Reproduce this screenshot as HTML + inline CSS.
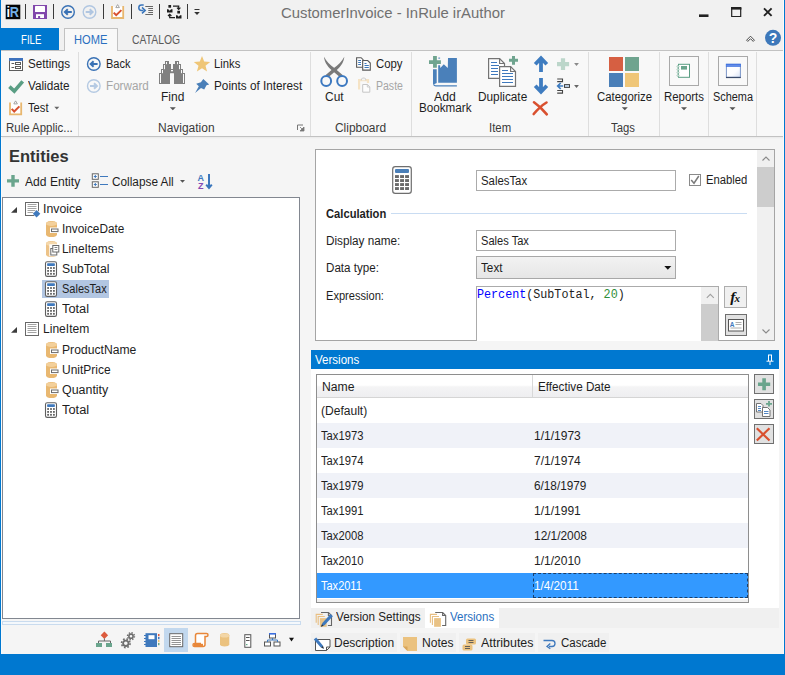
<!DOCTYPE html>
<html>
<head>
<meta charset="utf-8">
<title>CustomerInvoice - InRule irAuthor</title>
<style>
*{box-sizing:border-box;margin:0;padding:0}
html,body{width:785px;height:675px;overflow:hidden}
body{font-family:"Liberation Sans",sans-serif;font-size:12px;color:#1e1e1e;background:#f1f1f1;position:relative}
.abs{position:absolute}
.t{position:absolute;white-space:nowrap;line-height:14px;transform-origin:0 50%}
#win{position:absolute;left:0;top:0;width:785px;height:675px;border-left:1px solid #0078d0;border-right:1px solid #0078d0;background:#f1f1f1}
#status{position:absolute;left:0;top:654px;width:785px;height:21px;background:#0078d0}
#filetab{position:absolute;left:0;top:28px;width:59px;height:23px;background:#0078d0}
#hometab{position:absolute;left:64px;top:28px;width:54px;height:23px;background:#f8f8f8;border:1px solid #c2c2c2;border-bottom:none}
#ribbon{position:absolute;left:1px;top:50px;width:783px;height:87px;background:#f8f8f8;border-top:1px solid #c2c2c2;border-bottom:1px solid #c2c2c2}
#work{position:absolute;left:1px;top:137px;width:783px;height:517px;background:linear-gradient(#e9e9e9,#f5f5f5 2px,#f5f5f5)}
.sep{position:absolute;width:1px;background:#dedede;top:52px;height:84px}
#tree{position:absolute;left:2px;top:197px;width:298px;height:422px;background:#fff;border:1px solid #828790}
#sel{position:absolute;left:42px;top:280px;width:67px;height:18px;background:#b2c6e2}
#split{position:absolute;left:2px;top:621px;width:299px;height:4px;border:1px solid #c9dbee;background:#f4f8fc}
#tbsel{position:absolute;left:164px;top:628px;width:24px;height:24px;background:#c2d8ee}
#prop{position:absolute;left:315px;top:149px;width:460px;height:192px;background:#fff;border:1px solid #a5a5a5}
#psb{position:absolute;left:757px;top:150px;width:17px;height:190px;background:#f0f0f0}
#psbt{position:absolute;left:757px;top:167px;width:17px;height:40px;background:#cdcdcd}
.inp{position:absolute;background:#fff;border:1px solid #ababab}
#vhead{position:absolute;left:311px;top:350px;width:468px;height:19px;background:#0078d0}
#vbody{position:absolute;left:311px;top:369px;width:468px;height:239px;background:#fff}
#tbl{position:absolute;left:316px;top:374px;width:433px;height:229px;background:#fff;border:1px solid #8e8e8e}
#thead{position:absolute;left:317px;top:375px;width:431px;height:23px;background:linear-gradient(#ffffff,#ffffff 46%,#f4f4f5 54%,#eeeef0);border-bottom:1px solid #d5d5d5}
.alt{position:absolute;left:317px;width:431px;height:25px;background:#f0f2f8}
.btn{position:absolute;left:754px;width:20px;height:20px;background:#e1e1e1;border:1px solid #707070}
.tab2{position:absolute;top:633px;height:19px;background:#f0f0f0}
</style>
</head>
<body>
<div id="win"></div>
<div id="filetab"></div>
<div id="ribbon"></div>
<div id="work"></div>
<div id="hometab"></div>
<div class="sep" style="left:78px"></div>
<div class="sep" style="left:310px"></div>
<div class="sep" style="left:411px"></div>
<div class="sep" style="left:588px"></div>
<div class="sep" style="left:659px"></div>
<div class="sep" style="left:708px"></div>
<div class="sep" style="left:756px"></div>

<div class="abs" style="left:1px;top:137px;width:1px;height:517px;background:#fafafa"></div>
<div id="tree"></div>
<div id="sel"></div>
<div id="split"></div>
<div id="tbsel"></div>

<div id="prop"></div>
<div id="psb"></div><div id="psbt"></div>
<div class="inp" style="left:476px;top:170px;width:200px;height:21px"></div>
<div class="abs" style="left:689px;top:174px;width:12px;height:12px;border:1px solid #8a8a8a;background:#fff"></div>
<div class="abs" style="left:391px;top:213px;width:356px;height:1px;background:#c9dcf2"></div>
<div class="inp" style="left:476px;top:230px;width:200px;height:21px"></div>
<div class="inp" style="left:476px;top:256px;width:200px;height:23px;background:linear-gradient(#f2f2f2,#e6e6e6);border-color:#a8a8a8"></div>
<div class="inp" style="left:476px;top:286px;width:243px;height:55px;border-bottom:none"></div>
<div class="abs" style="left:701px;top:287px;width:17px;height:54px;background:#f0f0f0"></div>
<div class="abs" style="left:701px;top:304px;width:17px;height:37px;background:#cdcdcd"></div>
<div class="abs" style="left:724px;top:286px;width:23px;height:22px;background:#f0f0f0;border:1px solid #adadad"></div>
<div class="abs" style="left:725px;top:314px;width:22px;height:22px;background:#e1e1e1;border:1px solid #6e6e6e"></div>

<div id="vhead"></div>
<div id="vbody"></div>
<div class="abs" style="left:311px;top:608px;width:468px;height:20px;background:#f0f0f0"></div>
<div id="tbl"></div>
<div class="abs" style="left:317px;top:599px;width:431px;height:3px;background:#f0f0f0"></div>
<div id="thead"></div>
<div class="abs" style="left:532px;top:375px;width:1px;height:22px;background:#d8d8d8"></div>
<div class="alt" style="top:423px"></div>
<div class="alt" style="top:473px"></div>
<div class="alt" style="top:523px"></div>
<div class="alt" style="top:573px;background:#3399ff"></div>
<div class="abs" style="left:533px;top:573px;width:215px;height:25px;border:1px dashed #1a3f6b"></div>
<div class="btn" style="top:374px"></div>
<div class="btn" style="top:399px"></div>
<div class="btn" style="top:424px"></div>
<div class="abs" style="left:425px;top:608px;width:74px;height:20px;background:#fff"></div>
<div class="tab2" style="left:311px;width:86px"></div>
<div class="tab2" style="left:400px;width:56px"></div>
<div class="tab2" style="left:459px;width:76px"></div>
<div class="tab2" style="left:538px;width:71px"></div>
<div class="abs" style="left:783px;top:0;width:1px;height:654px;background:#fbfbfb"></div>
<div class="t" style="left:280.7px;top:4.1px;transform:scaleX(0.9590);font-size:15.5px;color:#707070;line-height:18px">CustomerInvoice - InRule irAuthor</div>
<div class="t" style="left:20.5px;top:32.7px;transform:scaleX(0.8049);color:#fff">FILE</div>
<div class="t" style="left:74.2px;top:32.7px;transform:scaleX(0.9278);color:#2a6fc0">HOME</div>
<div class="t" style="left:132.1px;top:32.7px;transform:scaleX(0.8654);color:#5a5a5a">CATALOG</div>
<div class="t" style="left:28.1px;top:56.9px;transform:scaleX(0.9686);">Settings</div>
<div class="t" style="left:28.3px;top:78.7px;transform:scaleX(0.9792);">Validate</div>
<div class="t" style="left:27.6px;top:100.7px;transform:scaleX(0.9357);">Test</div>
<div class="t" style="left:5.9px;top:120.7px;transform:scaleX(0.9536);color:#3a3a3a">Rule Applic...</div>
<div class="t" style="left:106.1px;top:56.9px;transform:scaleX(0.9180);">Back</div>
<div class="t" style="left:106.1px;top:78.7px;transform:scaleX(0.9724);color:#a6a6a6">Forward</div>
<div class="t" style="left:160.9px;top:89.7px;transform:scaleX(0.9981);">Find</div>
<div class="t" style="left:214.1px;top:56.9px;transform:scaleX(0.9388);">Links</div>
<div class="t" style="left:214.1px;top:78.7px;transform:scaleX(0.9795);">Points of Interest</div>
<div class="t" style="left:157.9px;top:120.7px;transform:scaleX(0.9982);color:#3a3a3a">Navigation</div>
<div class="t" style="left:325.0px;top:89.7px;transform:scaleX(0.9953);">Cut</div>
<div class="t" style="left:376.1px;top:56.9px;transform:scaleX(0.9459);">Copy</div>
<div class="t" style="left:376.1px;top:78.7px;transform:scaleX(0.8766);color:#a6a6a6">Paste</div>
<div class="t" style="left:335.1px;top:120.7px;transform:scaleX(0.9946);color:#3a3a3a">Clipboard</div>
<div class="t" style="left:433.6px;top:89.7px;transform:scaleX(1.0206);">Add</div>
<div class="t" style="left:418.6px;top:100.7px;transform:scaleX(0.9717);">Bookmark</div>
<div class="t" style="left:478.1px;top:89.7px;transform:scaleX(0.9834);">Duplicate</div>
<div class="t" style="left:489.0px;top:120.7px;transform:scaleX(0.9467);color:#3a3a3a">Item</div>
<div class="t" style="left:597.3px;top:89.7px;transform:scaleX(0.9495);">Categorize</div>
<div class="t" style="left:611.4px;top:120.7px;transform:scaleX(0.9425);color:#3a3a3a">Tags</div>
<div class="t" style="left:664.1px;top:89.7px;transform:scaleX(0.9517);">Reports</div>
<div class="t" style="left:712.6px;top:89.7px;transform:scaleX(0.9084);">Schema</div>
<div class="t" style="left:9.3px;top:145.7px;transform:scaleX(0.9998);font-size:16.5px;font-weight:bold;line-height:20px;color:#333">Entities</div>
<div class="t" style="left:25.1px;top:175.1px;transform:scaleX(1.0091);">Add Entity</div>
<div class="t" style="left:112.4px;top:175.1px;transform:scaleX(0.9840);">Collapse All</div>
<div class="t" style="left:42.6px;top:201.7px;transform:scaleX(1.0255);">Invoice</div>
<div class="t" style="left:62.0px;top:221.7px;transform:scaleX(0.9830);">InvoiceDate</div>
<div class="t" style="left:62.0px;top:241.7px;transform:scaleX(0.9917);">LineItems</div>
<div class="t" style="left:62.0px;top:261.7px;transform:scaleX(1.0171);">SubTotal</div>
<div class="t" style="left:62.0px;top:281.7px;transform:scaleX(0.9178);">SalesTax</div>
<div class="t" style="left:62.0px;top:301.7px;transform:scaleX(1.0686);">Total</div>
<div class="t" style="left:43.2px;top:321.7px;transform:scaleX(1.0058);">LineItem</div>
<div class="t" style="left:62.3px;top:342.7px;transform:scaleX(1.0126);">ProductName</div>
<div class="t" style="left:62.3px;top:362.7px;transform:scaleX(0.9982);">UnitPrice</div>
<div class="t" style="left:62.3px;top:382.7px;transform:scaleX(1.0357);">Quantity</div>
<div class="t" style="left:62.3px;top:402.7px;transform:scaleX(1.0726);">Total</div>
<div class="t" style="left:480.9px;top:173.7px;transform:scaleX(0.9466);">SalesTax</div>
<div class="t" style="left:705.6px;top:172.7px;transform:scaleX(0.9399);">Enabled</div>
<div class="t" style="left:325.8px;top:206.7px;transform:scaleX(0.9322);font-weight:bold">Calculation</div>
<div class="t" style="left:325.7px;top:234.1px;transform:scaleX(0.9772);">Display name:</div>
<div class="t" style="left:480.7px;top:234.1px;transform:scaleX(0.9245);">Sales Tax</div>
<div class="t" style="left:325.7px;top:260.7px;transform:scaleX(0.9670);">Data type:</div>
<div class="t" style="left:480.7px;top:260.7px;transform:scaleX(0.9766);">Text</div>
<div class="t" style="left:325.7px;top:288.5px;transform:scaleX(0.9234);">Expression:</div>
<div class="t" style="left:477.2px;top:287.7px;transform:scaleX(0.9765);font-family:'Liberation Mono',monospace;font-size:12px;color:#222"><span style="color:#0000ff">Percent</span>(SubTotal, <span style="color:#2f8f3a">20</span>)</div>
<div class="t" style="left:315.3px;top:353.3px;transform:scaleX(0.9624);color:#fff">Versions</div>
<div class="t" style="left:322.0px;top:379.7px;transform:scaleX(1.0151);">Name</div>
<div class="t" style="left:538.2px;top:379.7px;transform:scaleX(0.9747);">Effective Date</div>
<div class="t" style="left:320.8px;top:403.7px;transform:scaleX(1.0040);">(Default)</div>
<div class="t" style="left:320.8px;top:428.7px;transform:scaleX(0.9344);">Tax1973</div>
<div class="t" style="left:533.9px;top:428.7px;transform:scaleX(1.0017);">1/1/1973</div>
<div class="t" style="left:320.8px;top:453.7px;transform:scaleX(0.9344);">Tax1974</div>
<div class="t" style="left:533.9px;top:453.7px;transform:scaleX(1.0017);">7/1/1974</div>
<div class="t" style="left:320.8px;top:478.7px;transform:scaleX(0.9344);">Tax1979</div>
<div class="t" style="left:533.9px;top:478.7px;transform:scaleX(0.9814);">6/18/1979</div>
<div class="t" style="left:320.8px;top:503.7px;transform:scaleX(0.9344);">Tax1991</div>
<div class="t" style="left:533.9px;top:503.7px;transform:scaleX(1.0017);">1/1/1991</div>
<div class="t" style="left:320.8px;top:528.7px;transform:scaleX(0.9344);">Tax2008</div>
<div class="t" style="left:533.9px;top:528.7px;transform:scaleX(0.9927);">12/1/2008</div>
<div class="t" style="left:320.8px;top:553.7px;transform:scaleX(0.9344);">Tax2010</div>
<div class="t" style="left:533.9px;top:553.7px;transform:scaleX(1.0017);">1/1/2010</div>
<div class="t" style="left:320.8px;top:578.7px;transform:scaleX(0.9172);color:#fff">Tax2011</div>
<div class="t" style="left:533.9px;top:578.7px;transform:scaleX(0.9754);color:#fff">1/4/2011</div>
<div class="t" style="left:336.0px;top:610.2px;transform:scaleX(0.9756);">Version Settings</div>
<div class="t" style="left:450.1px;top:610.2px;transform:scaleX(0.9602);color:#2a6fc0">Versions</div>
<div class="t" style="left:334.0px;top:636.2px;transform:scaleX(1.0011);">Description</div>
<div class="t" style="left:421.6px;top:636.2px;transform:scaleX(1.0077);">Notes</div>
<div class="t" style="left:480.6px;top:636.2px;transform:scaleX(1.0354);">Attributes</div>
<div class="t" style="left:560.6px;top:636.2px;transform:scaleX(0.9583);">Cascade</div>
<svg id="ico" class="abs" style="left:0;top:0;pointer-events:none" width="785" height="675" viewBox="0 0 785 675">
<!-- title bar -->
<rect x="5.700" y="4.700" width="14.600" height="14.500" fill="#050505"/>
<text transform="translate(6.400,16.700) scale(0.88,1)" font-family="Liberation Sans, sans-serif" font-weight="bold" font-size="14.500" fill="#fff">i<tspan fill="#74b0e6" dx="-0.300">R</tspan></text>
<g stroke="#3a3a3a" stroke-width="1"><path d="M25.5 4v15M53.5 4v15M103.5 4v15M131.5 4v15M159.5 4v15M187.5 4v15"/></g>
<!-- save -->
<path d="M33 5h14v14h-14z" fill="#8147ab"/><rect x="35" y="6" width="10" height="6" rx="0.6" fill="#fff"/><rect x="36" y="14.2" width="8" height="3.8" fill="#fff"/><rect x="38.1" y="16" width="2" height="2.2" fill="#8147ab"/>
<!-- back / forward -->
<g fill="none" stroke="#3a72b5" stroke-width="1.4"><circle cx="68" cy="12" r="6.3"/><path d="M71.800 12h-6M67.800 9.200l-2.900 2.800 2.900 2.800" stroke-width="2"/></g>
<g fill="none" stroke="#b0c6e1" stroke-width="1.4"><circle cx="89.500" cy="12" r="6.300"/><path d="M85.700 12h6M89.700 9.200l2.900 2.800-2.900 2.800" stroke-width="2"/></g>
<!-- clipboard check -->
<g id="clipc"><rect x="112" y="6.500" width="11.200" height="11.500" fill="#fff"/><path d="M112 6.100v11.900h11.200v-11.900" fill="none" stroke="#e8b76f" stroke-width="1.800"/><path d="M115.800 7.600l1.800-3 1.800 3z" fill="#fff" stroke="#9a9a9a" stroke-width=".9"/><path d="M113.700 12.600l2.500 2.600 5.200-5.100" fill="none" stroke="#d8502f" stroke-width="2"/></g>
<!-- step into -->
<path d="M143.700 5h-2.200a2.700 2.700 0 0 0 0 5.400h2" fill="none" stroke="#3a76bc" stroke-width="1.500"/><path d="M142 7.400l3.200 3-3.200 3" fill="none" stroke="#3a76bc" stroke-width="1.500"/>
<g stroke="#666" stroke-width="1"><path d="M145.300 6.500h7.700M148.300 8.500h4.700M148.300 10.500h4.700M148.300 12.500h4.700M145.300 14.500h7.700"/></g>
<!-- squares arrows -->
<g fill="#1e1e1e"><rect x="168.400" y="5" width="2.700" height="2.700"/><path d="M167 12.600v-3.300h1.300l1.400 1.500 1.400-1.500h1.400v3.300z"/><rect x="177.300" y="10.800" width="2.700" height="2.700"/><path d="M176 18.600v-3.300h1.300l1.400 1.500 1.400-1.500h1.400v3.300z"/></g>
<g fill="none" stroke="#1e1e1e" stroke-width="1.200"><path d="M173 6.200h5.700v2.800"/><path d="M177 7.600l1.700 1.700 1.700-1.700"/><path d="M175 17.600h-5.300v-2.800"/><path d="M168 16l1.700-1.700 1.700 1.700"/></g>
<!-- qat dropdown -->
<path d="M194.5 9.5h5" stroke="#333" stroke-width="1"/><path d="M194.2 12h5.6l-2.8 3z" fill="#333"/>
<!-- window controls -->
<rect x="699" y="14.4" width="9.5" height="2.6" fill="#222"/>
<path d="M731.7 8.5h9v8h-9z" fill="none" stroke="#222" stroke-width="1.2"/><rect x="731" y="7" width="10.4" height="2.6" fill="#222"/>
<path d="M764 8.3l7.6 7.6M771.6 8.3l-7.6 7.6" stroke="#222" stroke-width="1.9"/>
<path d="M746.6 40.2l3.9-4 3.9 4-1.2 1.2-2.7-2.7-2.7 2.7z" fill="#fff" stroke="#333" stroke-width=".9"/>
<circle cx="773" cy="37.8" r="8" fill="#3d78ba"/>
<text x="773" y="43" text-anchor="middle" font-family="Liberation Sans, sans-serif" font-weight="bold" font-size="14" fill="#fff">?</text>

<!-- ribbon: settings -->
<rect x="9.500" y="58.500" width="13" height="12" fill="#fff" stroke="#5c5c5c" stroke-width="1"/><rect x="9" y="58" width="14" height="2.900" fill="#3d72bd"/>
<g stroke="#5c5c5c" stroke-width="1" fill="#fff"><path d="M11.500 63.500h2.700M11.500 67.500h2.700"/><rect x="15.500" y="62.500" width="5" height="2"/><rect x="15.500" y="66.500" width="5" height="2"/></g>
<!-- validate -->
<path d="M9.400 86.600l4.900 4.500 8.400-9.800" fill="none" stroke="#5a9e84" stroke-width="3.600"/>
<!-- test -->
<g transform="translate(-102,96.300)"><rect x="112" y="6.500" width="11.200" height="11.500" fill="#fff"/><path d="M112 6.100v11.900h11.200v-11.900" fill="none" stroke="#e8b76f" stroke-width="1.800"/><path d="M115.800 7.600l1.800-3 1.800 3z" fill="#fff" stroke="#9a9a9a" stroke-width=".9"/><path d="M113.700 12.600l2.500 2.600 5.200-5.100" fill="none" stroke="#d8502f" stroke-width="2"/></g>
<path d="M54.300 106.800h5l-2.500 2.800z" fill="#666"/>
<!-- back/forward ribbon -->
<g fill="none" stroke="#3a72b5" stroke-width="1.400"><circle cx="93.800" cy="64" r="6.300"/><path d="M97.600 64h-6M93.600 61.200l-2.900 2.800 2.900 2.800" stroke-width="2"/></g>
<g fill="none" stroke="#b5cae3" stroke-width="1.400"><circle cx="93.800" cy="86" r="6.300"/><path d="M90 86h6M94 83.200l2.900 2.800-2.900 2.800" stroke-width="2"/></g>
<!-- binoculars -->
<g fill="#808080"><rect x="165" y="61" width="4" height="3.200"/><rect x="163" y="64" width="8" height="5.200"/><rect x="161" y="69" width="10" height="4.200"/><rect x="159" y="73" width="11" height="11"/>
<rect x="175" y="61" width="4" height="3.200"/><rect x="173" y="64" width="8" height="5.200"/><rect x="173" y="69" width="10" height="4.200"/><rect x="174" y="73" width="11" height="11"/><rect x="170.500" y="69" width="3" height="4.200"/></g>
<g fill="#fafafa"><rect x="160" y="74" width="1" height="9"/><rect x="162" y="70" width="1" height="3.200"/><rect x="164" y="65" width="1" height="4.200"/><rect x="166" y="62" width="1" height="2.200"/><rect x="183" y="74" width="1" height="9"/><rect x="181" y="70" width="1" height="3.200"/><rect x="179" y="65" width="1" height="4.200"/><rect x="177" y="62" width="1" height="2.200"/><rect x="171" y="70" width="2" height="1.300"/></g>
<path d="M169.800 107.300h6l-3 2.900z" fill="#555"/>
<!-- star -->
<path d="M202.0 56.0L204.2 61.6L210.2 61.9L205.5 65.7L207.1 71.6L202.0 68.3L196.9 71.6L198.5 65.7L193.8 61.9L199.8 61.6z" fill="#efc677"/>
<!-- pin -->
<path d="M203.300 79.100l5.900 5.500-2.700.7-2.300 4.100-3.200-1.300-5.900 5 3.700-6.900-2.600-2.400 4.700-1.600z" fill="#4a7fb8"/>
<!-- dialog launcher -->
<path d="M297.500 130v-5h5.500" fill="none" stroke="#777" stroke-width="1"/><path d="M304 127v4h-4zM300 127l3.300 3.300" fill="#777" stroke="#777" stroke-width=".8"/>
<!-- scissors -->
<path d="M324 56.800c.3 4.500 3 9.500 7.500 13.200l8.500 7.200 2.600-2.200-7.600-6.400c-5.200-3.600-8.600-7.300-11-11.800z" fill="#7a7a7a"/>
<path d="M344.300 56.800c-.3 4.500-3 9.500-7.500 13.200l-8.500 7.200-2.600-2.200 7.600-6.400c5.200-3.600 8.600-7.300 11-11.800z" fill="#7a7a7a"/>
<circle cx="326.200" cy="81" r="4.900" fill="none" stroke="#3b78c0" stroke-width="2"/><circle cx="342.100" cy="81" r="4.900" fill="none" stroke="#3b78c0" stroke-width="2"/>
<!-- copy -->
<g fill="#fff" stroke="#5a5a5a" stroke-width="1.100"><path d="M356.600 57.700h4.500l2 2v7.500h-6.500z"/><path d="M362.700 60.500h5l2.600 2.600v7h-7.600z"/></g>
<g stroke="#3d78ba" stroke-width="1"><path d="M358.200 60.500h2.800M358.200 62.500h2.800M358.200 64.500h2.800M364.500 63.500h2M364.500 65.500h4.300M364.500 67.500h4.300"/></g>
<!-- paste (disabled) -->
<path d="M359.100 89.500v-9.400h8.900v3" fill="none" stroke="#f5e3c5" stroke-width="2.200"/><path d="M361.500 80.300v-1.300l1-1h2.200l1 1v1.300" fill="#f4f4f4" stroke="#c9c9c9" stroke-width=".9"/><path d="M362.700 84.500h4.700l2.400 2.400v5.300h-7.100z" fill="#fdfdfd" stroke="#c6c6c6" stroke-width="1"/><path d="M367.300 84.600v2.400h2.400" fill="none" stroke="#c6c6c6" stroke-width=".9"/>
<!-- add bookmark -->
<path d="M438.200 82.800v-17.500h1.900l.2 2.700 3.500-3.700 4 3.700.2-10.100h8.900v24.900z" fill="#4a80ba"/>
<path d="M433 69.200h3.700v13.800l-3.700 1.800z" fill="#4a80ba"/>
<path d="M433.600 84.500c.5 1 1.200 1.300 2.200 1.300h21.100" fill="none" stroke="#4a80ba" stroke-width="1.300"/>
<rect x="438.300" y="57.600" width="1.800" height="1" fill="#4a80ba"/>
<path d="M429 62.050h11.900M434.950 56v11.700" stroke="#6fa48f" stroke-width="3.800"/>
<!-- duplicate -->
<g fill="#fff" stroke="#747474" stroke-width="1.200" stroke-linejoin="miter"><path d="M488.600 58.600h11l4.900 4.900v14.900h-15.900z"/><path d="M499.600 58.600v4.900h4.900" fill="none"/><path d="M499.600 66.600h11l4.900 4.900v14.900h-15.900z"/><path d="M510.600 66.600v4.900h4.900" fill="none"/></g>
<g stroke="#3f79bd" stroke-width="1.100"><path d="M491 62.500h6M491 65.500h8M491 68.500h7M491 71.500h7M491 74.500h7M502 70.500h6M502 73.500h11M502 76.500h11M502 79.500h11M502 82.500h11"/></g>
<path d="M509 60.350h9M513.500 56v8.700" stroke="#6fa48f" stroke-width="3"/>
<!-- up / down arrows -->
<path d="M541 71.900v-13M535.200 64.200l5.800-6 5.800 6" fill="none" stroke="#3e7cc0" stroke-width="3.800" stroke-linejoin="miter"/>
<path d="M541 78v13M535.200 85.700l5.800 6 5.800-6" fill="none" stroke="#3e7cc0" stroke-width="3.800" stroke-linejoin="miter"/>
<path d="M534 102.300c5 3.500 9 7.500 12.800 12M546.500 102.500c-5 3-9 7-12.800 11.500" fill="none" stroke="#d9502f" stroke-width="2.600" stroke-linecap="round"/>
<!-- add small (disabled) -->
<path d="M557 64.050h12.100M563 58.200v11.700" stroke="#bcd6ca" stroke-width="4.200"/>
<path d="M574.100 63h4.800l-2.400 2.900z" fill="#8a8a8a"/>
<!-- indent -->
<g fill="none" stroke="#444" stroke-width="1.100"><path d="M557.200 79h5.300v2.600h-5.300M557.200 90.500h5.300v2.600h-5.300"/></g>
<path d="M563.200 86h-5M560.700 83l-3 3 3 3" fill="none" stroke="#3e7cc0" stroke-width="1.700"/><rect x="564.500" y="84.600" width="5" height="2.800" fill="#c5d9f0" stroke="#444" stroke-width="1"/>
<path d="M574.100 85h4.800l-2.400 2.900z" fill="#666"/>
<!-- categorize -->
<rect x="609" y="57" width="14" height="14" fill="#d65f42"/><rect x="625" y="57" width="14" height="14" fill="#6fa48f"/><rect x="609" y="73" width="14" height="14" fill="#4a7fb8"/><rect x="625" y="73" width="14" height="14" fill="#efc678"/>
<path d="M621.800 107.300h6l-3 2.900z" fill="#555"/>
<!-- reports -->
<rect x="669.500" y="56.500" width="29" height="29" fill="#f9f9f9" stroke="#a9a9a9"/>
<rect x="678.500" y="64.300" width="11" height="13" fill="#fff" stroke="#5a9e84" stroke-width="1"/><rect x="681" y="66" width="6" height="3.600" fill="#6aa58d"/><g fill="#f9f9f9" stroke="#7fb59f" stroke-width=".7"><circle cx="678" cy="66.500" r="1"/><circle cx="678" cy="69.500" r="1"/><circle cx="678" cy="72.500" r="1"/><circle cx="678" cy="75.500" r="1"/></g>
<path d="M681 107.300h6l-3 2.900z" fill="#555"/>
<!-- schema -->
<defs><linearGradient id="sg" x1="0" y1="0" x2="1" y2="1"><stop offset="0" stop-color="#fff"/><stop offset=".6" stop-color="#fdfdff"/><stop offset="1" stop-color="#d9e2f5"/></linearGradient></defs>
<rect x="718.500" y="56.500" width="29" height="29" fill="#f9f9f9" stroke="#a9a9a9"/>
<rect x="726.400" y="64.300" width="14" height="13" fill="url(#sg)" stroke="#7c96c8" stroke-width="1"/><path d="M726 77.500h14.800" stroke="#3b4b6b" stroke-width="1.200"/><rect x="725.900" y="63.800" width="15" height="3" fill="#3f72e0"/><path d="M726.400 65.300h14" stroke="#7fa2ee" stroke-width=".7"/>
<path d="M729.500 107.300h6l-3 2.900z" fill="#555"/>
<!-- left panel icons -->
<path d="M7 180.900h12M13 175v11.700" stroke="#6aa58d" stroke-width="3.400"/>
<g fill="#fff" stroke="#666" stroke-width="1"><rect x="92.300" y="173.800" width="6" height="5.500"/><rect x="92.300" y="181.800" width="6" height="5.500"/></g><path d="M93.800 176.500h3M95.300 175v3M93.800 184.500h3M95.300 183v3" stroke="#3f79bd" stroke-width="1"/><path d="M100 176.500h8M100 184.500h8" stroke="#3f79bd" stroke-width="1"/>
<path d="M180 180h5l-2.500 2.800z" fill="#555"/>
<text x="197.600" y="180.500" font-family="Liberation Sans, sans-serif" font-weight="bold" font-size="9" fill="#3f79bd">A</text><text x="198" y="189" font-family="Liberation Sans, sans-serif" font-weight="bold" font-size="9" fill="#8548b3">Z</text>
<path d="M209 174v13.500M206.200 184.600l2.800 3.400 2.800-3.400" fill="none" stroke="#3a76bc" stroke-width="2"/>
<path d="M17.0 206.9v5.800h-6z" fill="#3c3c3c"/>
<g transform="translate(25.0,202.0)"><rect x="0.500" y="0.500" width="13" height="13" fill="#fff" stroke="#686868" stroke-width="1"/><path d="M2.500 2.500h9M2.500 4.500h9M2.500 6.500h9M2.500 8.500h9M2.500 10.500h9" stroke="#9a9a9a" stroke-width=".9"/><path d="M11.600 7.300l4.300 4.300-4.300 4.300-4.300-4.300z" fill="#fff"/><path d="M11.600 8l3.700 3.700-3.700 3.700-3.700-3.700z" fill="#3f79bd"/></g>
<g transform="translate(46.0,221.0)"><path d="M0 2.600c0-3.400 11-3.400 11 0v10.800c0 3.400-11 3.400-11 0z" fill="#e9b871"/><ellipse cx="5.500" cy="2.700" rx="5.500" ry="2.300" fill="#f3d09b"/><rect x="4" y="6.500" width="8.500" height="5.500" fill="#fff"/><rect x="5.500" y="8" width="6.500" height="2.600" fill="#fff" stroke="#6a6a6a" stroke-width="1"/></g>
<g transform="translate(46.0,241.0)"><path d="M0 2.600c0-3.400 11-3.400 11 0v10.800c0 3.400-11 3.400-11 0z" fill="#edc388"/><ellipse cx="5.500" cy="2.700" rx="5.500" ry="2.300" fill="#f5d8ab"/><rect x="3.300" y="3.300" width="10" height="12" fill="#fff"/><g fill="#fff" stroke="#6a6a6a" stroke-width="1"><rect x="4.800" y="7.500" width="6" height="6.500"/><rect x="6.800" y="4.500" width="6" height="6.500"/></g><path d="M8.500 6.500h2.800M8.500 8.500h2.800" stroke="#6a6a6a" stroke-width=".8"/></g>
<g transform="translate(45.0,261.3) scale(1.000)"><rect x="0.500" y="0.400" width="11" height="14.700" rx="1.700" fill="#fff" stroke="#5f5f5f" stroke-width="1.100"/><rect x="2.100" y="2" width="7.800" height="2.600" rx=".7" fill="#3f79bd"/><rect x="2.2" y="5.800" width="1.8" height="1.8" fill="#636363"/><rect x="5.1" y="5.800" width="1.8" height="1.8" fill="#636363"/><rect x="8.0" y="5.800" width="1.8" height="1.8" fill="#636363"/><rect x="2.2" y="8.700" width="1.8" height="1.8" fill="#636363"/><rect x="5.1" y="8.700" width="1.8" height="1.8" fill="#636363"/><rect x="8.0" y="8.700" width="1.8" height="1.8" fill="#636363"/><rect x="2.2" y="11.600" width="1.8" height="1.8" fill="#636363"/><rect x="5.1" y="11.600" width="1.8" height="1.8" fill="#636363"/><rect x="8.0" y="11.600" width="1.8" height="1.8" fill="#636363"/></g>
<g transform="translate(45.0,281.3) scale(1.000)"><rect x="0.500" y="0.400" width="11" height="14.700" rx="1.700" fill="#fff" stroke="#5f5f5f" stroke-width="1.100"/><rect x="2.100" y="2" width="7.800" height="2.600" rx=".7" fill="#3f79bd"/><rect x="2.2" y="5.800" width="1.8" height="1.8" fill="#636363"/><rect x="5.1" y="5.800" width="1.8" height="1.8" fill="#636363"/><rect x="8.0" y="5.800" width="1.8" height="1.8" fill="#636363"/><rect x="2.2" y="8.700" width="1.8" height="1.8" fill="#636363"/><rect x="5.1" y="8.700" width="1.8" height="1.8" fill="#636363"/><rect x="8.0" y="8.700" width="1.8" height="1.8" fill="#636363"/><rect x="2.2" y="11.600" width="1.8" height="1.8" fill="#636363"/><rect x="5.1" y="11.600" width="1.8" height="1.8" fill="#636363"/><rect x="8.0" y="11.600" width="1.8" height="1.8" fill="#636363"/></g>
<g transform="translate(45.0,301.3) scale(1.000)"><rect x="0.500" y="0.400" width="11" height="14.700" rx="1.700" fill="#fff" stroke="#5f5f5f" stroke-width="1.100"/><rect x="2.100" y="2" width="7.800" height="2.600" rx=".7" fill="#3f79bd"/><rect x="2.2" y="5.800" width="1.8" height="1.8" fill="#636363"/><rect x="5.1" y="5.800" width="1.8" height="1.8" fill="#636363"/><rect x="8.0" y="5.800" width="1.8" height="1.8" fill="#636363"/><rect x="2.2" y="8.700" width="1.8" height="1.8" fill="#636363"/><rect x="5.1" y="8.700" width="1.8" height="1.8" fill="#636363"/><rect x="8.0" y="8.700" width="1.8" height="1.8" fill="#636363"/><rect x="2.2" y="11.600" width="1.8" height="1.8" fill="#636363"/><rect x="5.1" y="11.600" width="1.8" height="1.8" fill="#636363"/><rect x="8.0" y="11.600" width="1.8" height="1.8" fill="#636363"/></g>
<path d="M17.0 326.9v5.800h-6z" fill="#3c3c3c"/>
<g transform="translate(25.0,322.0)"><rect x="0.500" y="0.500" width="13" height="13" fill="#fff" stroke="#686868" stroke-width="1"/><path d="M2.500 2.500h9M2.500 4.500h9M2.500 6.500h9M2.500 8.500h9M2.500 10.500h9" stroke="#9a9a9a" stroke-width=".9"/></g>
<g transform="translate(46.0,342.0)"><path d="M0 2.600c0-3.400 11-3.400 11 0v10.800c0 3.400-11 3.400-11 0z" fill="#e9b871"/><ellipse cx="5.500" cy="2.700" rx="5.500" ry="2.300" fill="#f3d09b"/><rect x="4" y="6.500" width="8.500" height="5.500" fill="#fff"/><rect x="5.500" y="8" width="6.500" height="2.600" fill="#fff" stroke="#6a6a6a" stroke-width="1"/></g>
<g transform="translate(46.0,362.0)"><path d="M0 2.600c0-3.400 11-3.400 11 0v10.800c0 3.400-11 3.400-11 0z" fill="#e9b871"/><ellipse cx="5.500" cy="2.700" rx="5.500" ry="2.300" fill="#f3d09b"/><rect x="4" y="6.500" width="8.500" height="5.500" fill="#fff"/><rect x="5.500" y="8" width="6.500" height="2.600" fill="#fff" stroke="#6a6a6a" stroke-width="1"/></g>
<g transform="translate(46.0,382.0)"><path d="M0 2.600c0-3.400 11-3.400 11 0v10.800c0 3.400-11 3.400-11 0z" fill="#e9b871"/><ellipse cx="5.500" cy="2.700" rx="5.500" ry="2.300" fill="#f3d09b"/><rect x="4" y="6.500" width="8.500" height="5.500" fill="#fff"/><rect x="5.500" y="8" width="6.500" height="2.600" fill="#fff" stroke="#6a6a6a" stroke-width="1"/></g>
<g transform="translate(45.0,402.3) scale(1.000)"><rect x="0.500" y="0.400" width="11" height="14.700" rx="1.700" fill="#fff" stroke="#5f5f5f" stroke-width="1.100"/><rect x="2.100" y="2" width="7.800" height="2.600" rx=".7" fill="#3f79bd"/><rect x="2.2" y="5.800" width="1.8" height="1.8" fill="#636363"/><rect x="5.1" y="5.800" width="1.8" height="1.8" fill="#636363"/><rect x="8.0" y="5.800" width="1.8" height="1.8" fill="#636363"/><rect x="2.2" y="8.700" width="1.8" height="1.8" fill="#636363"/><rect x="5.1" y="8.700" width="1.8" height="1.8" fill="#636363"/><rect x="8.0" y="8.700" width="1.8" height="1.8" fill="#636363"/><rect x="2.2" y="11.600" width="1.8" height="1.8" fill="#636363"/><rect x="5.1" y="11.600" width="1.8" height="1.8" fill="#636363"/><rect x="8.0" y="11.600" width="1.8" height="1.8" fill="#636363"/></g>
<g><rect x="392.700" y="166.700" width="18.600" height="26.600" rx="2.600" fill="#fff" stroke="#6e6e6e" stroke-width="1.200"/><rect x="395" y="169" width="14" height="3.900" rx="1" fill="#4a7fb8"/><rect x="395.0" y="175.1" width="3.900" height="2.900" fill="#6a6a6a"/><rect x="400.1" y="175.1" width="3.900" height="2.900" fill="#6a6a6a"/><rect x="405.1" y="175.1" width="3.900" height="2.900" fill="#6a6a6a"/><rect x="395.0" y="179.1" width="3.900" height="2.900" fill="#6a6a6a"/><rect x="400.1" y="179.1" width="3.900" height="2.900" fill="#6a6a6a"/><rect x="405.1" y="179.1" width="3.900" height="2.900" fill="#6a6a6a"/><rect x="395.0" y="183.1" width="3.900" height="2.900" fill="#6a6a6a"/><rect x="400.1" y="183.1" width="3.900" height="2.900" fill="#6a6a6a"/><rect x="405.1" y="183.1" width="3.900" height="2.900" fill="#6a6a6a"/><rect x="395.0" y="187.1" width="3.900" height="2.900" fill="#6a6a6a"/><rect x="400.1" y="187.1" width="3.900" height="2.900" fill="#6a6a6a"/><rect x="405.1" y="187.1" width="3.900" height="2.900" fill="#6a6a6a"/></g>
<!-- prop panel icons -->
<path d="M691.200 180l2.800 3.200 4.800-7.200" fill="none" stroke="#7a7a7a" stroke-width="1.500"/>
<path d="M762.500 160.500l3.500-3.500 3.500 3.500" fill="none" stroke="#8a8a8a" stroke-width="1.100"/>
<path d="M762.500 329.500l3.500 3.500 3.500-3.500" fill="none" stroke="#8a8a8a" stroke-width="1.100"/>
<path d="M706.800 297.800l3.500-3.500 3.500 3.500" fill="none" stroke="#a0a0a0" stroke-width="1.100"/>
<path d="M664.300 266h7l-3.500 3.800z" fill="#111"/>
<text x="730.300" y="302.200" font-family="Liberation Serif, serif" font-style="italic" font-weight="bold" font-size="15.500" fill="#111">f<tspan font-size="11" dx="-1">x</tspan></text>
<rect x="728.500" y="319.500" width="15" height="11.500" fill="#fff" stroke="#555" stroke-width="1"/>
<text x="729.800" y="326.500" font-family="Liberation Sans, sans-serif" font-weight="bold" font-size="6.500" fill="#3f79bd">A</text>
<path d="M735.500 322.500h6M735.500 324.500h6M730.500 328h11" stroke="#999" stroke-width=".8"/>
<!-- pin -->
<path d="M768.500 355v6M771.500 355v6M768 355h4M766.500 361.200h7M770 361.500v3.500" fill="none" stroke="#fff" stroke-width="1"/>
<!-- versions buttons -->
<path d="M758 384.200h12.200M764.100 378.200v12" stroke="#6aa58d" stroke-width="3.600"/>
<g fill="#fff" stroke="#666" stroke-width=".9"><path d="M756.500 403.500h4.500l2 2v6.500h-6.500z"/><path d="M762.500 407.500h5l2.500 2.500v6.500h-7.500z"/></g>
<path d="M758 406.500h3M758 408.500h3M758 410.500h3M764 411.500h4.500M764 413.500h4.500" stroke="#3f79bd" stroke-width=".9"/>
<path d="M766 403.800h6M769 401v5.600" stroke="#6aa58d" stroke-width="1.800"/>
<path d="M756.800 428.200l12.700 12.300M769.500 428.200l-12.700 12.300" stroke="#d9502f" stroke-width="2.200"/>
<!-- bottom tabs icons -->
<g id="vsicon"><g transform="translate(-114.2,0)"><path d="M437 614.400h-6.600v8.400M439 616.500h-6.600v8.400" fill="none" stroke="#e9bf82" stroke-width="1.100"/><rect x="434.100" y="618.100" width="6.800" height="8.700" fill="#e9c285"/><path d="M435.200 612.500h7.500l3 3v10h-3.600M442.600 612.500v3h3" fill="none" stroke="#666" stroke-width="1.100"/></g><path d="M330.600 614l2.300 2.300-8.400 8.900-3.500 1.500 1.400-3.600z" fill="#3f79bd"/><path d="M321 626.700l1-2.500 1.600 1.600z" fill="#333"/></g>
<g id="vicon"><g transform="translate(0.0,0)"><path d="M437 614.400h-6.600v8.400M439 616.500h-6.600v8.400" fill="none" stroke="#e9bf82" stroke-width="1.100"/><rect x="434.100" y="618.100" width="6.800" height="8.700" fill="#e9c285"/><path d="M435.200 612.500h7.500l3 3v10h-3.600M442.600 612.500v3h3" fill="none" stroke="#666" stroke-width="1.100"/></g></g>
<path d="M315.500 639.500h14.500v7.500l-3.500 3.500h-11z" fill="#fff" stroke="#555" stroke-width="1"/><path d="M326.500 650.500v-3.500h3.500" fill="none" stroke="#555" stroke-width="1"/><path d="M313.800 639.600l2.400-2 6.600 7.800 1 3.400-3.200-1.500z" fill="#3f79bd"/><path d="M323.800 648.800l-.8-2.700-1.800 1.500z" fill="#333"/>
<path d="M403 637h14v14h-9.500l-4.500-4.500z" fill="#ebc27f"/><path d="M403 646.500h4.500v4.500z" fill="#d9a65a"/>
<rect x="466" y="638.500" width="10" height="6" rx="1.500" fill="#ebc27f"/><rect x="462.500" y="644.500" width="10" height="6" rx="1.500" fill="#ebc27f"/><path d="M468.500 640.500h5M468.500 642.500h5M465 646.500h5M465 648.500h5" stroke="#555" stroke-width=".9"/>
<path d="M543.500 640.500h8.500a3 3 0 0 1 0 6h-3" fill="none" stroke="#3f79bd" stroke-width="1.300"/><path d="M550.300 643.600l-3.300 2.900 3.300 2.300" fill="none" stroke="#3f79bd" stroke-width="1.300"/>
<!-- bottom-left toolbar -->
<path d="M104.400 631.600l3.700 3.700-3.700 3.700-3.700-3.700z" fill="#dc5b3e"/><path d="M104.400 638.500v2.500M98.500 643.500v-2.500h12v2.500" fill="none" stroke="#666" stroke-width="1"/><rect x="96" y="643" width="6" height="4" fill="#6aa58d"/><rect x="106" y="643" width="6" height="4" fill="#6aa58d"/>
<g fill="none" stroke="#6e6e6e"><circle cx="125.800" cy="643.300" r="2.700" stroke-width="1.800"/><circle cx="125.800" cy="643.300" r="4.300" stroke-width="1.600" stroke-dasharray="1.700 1.680"/><circle cx="131" cy="636.200" r="2.100" stroke-width="1.600"/><circle cx="131" cy="636.200" r="3.500" stroke-width="1.400" stroke-dasharray="1.400 1.350"/></g>
<rect x="145.500" y="633.200" width="11.500" height="13.800" fill="#3f79bd"/><rect x="148.500" y="635.200" width="6" height="4" fill="#fff"/><path d="M144 635.500h2.500M144 638.500h2.500M144 641.500h2.500M144 644.500h2.500" stroke="#3f79bd" stroke-width="1.200"/><rect x="158" y="634" width="1.500" height="2.200" fill="#dc5b3e"/><rect x="158" y="637" width="1.500" height="2.200" fill="#3f79bd"/><rect x="158" y="640" width="1.500" height="2.200" fill="#efc678"/><rect x="158" y="643" width="1.500" height="2.200" fill="#6aa58d"/>
<rect x="169.700" y="633.700" width="13" height="13" fill="#fff" stroke="#666" stroke-width="1"/><path d="M171.500 636.500h9.500M171.500 638.500h9.500M171.500 640.500h9.500M171.500 642.500h9.500M171.500 644.500h9.500" stroke="#888" stroke-width=".9"/>
<path d="M195.500 646v-10.500a2 2 0 0 1 2-2h9a1.500 1.500 0 0 1 0 3h-1.500v8a2 2 0 0 1 -2 2h-8.500a1.500 1.500 0 0 1 0-3h6.500" fill="#fff" stroke="#e8873a" stroke-width="1.500"/><path d="M194 643.800h9v2.500h-9z" fill="#e8873a"/>
<path d="M220 635.200c0-3 9.300-3 9.300 0v9c0 3-9.300 3-9.300 0z" fill="#ebc27f"/><ellipse cx="224.650" cy="635.400" rx="4.650" ry="2" fill="#f3d6a6"/>
<rect x="244.800" y="634.700" width="6" height="12.600" fill="#fff" stroke="#555" stroke-width="1"/><path d="M246 637.500h3.600M246 640.500h3.600" stroke="#555" stroke-width="1"/><rect x="246.200" y="644" width="1.200" height="1.200" fill="#3a9a6a"/>
<g fill="#fff" stroke="#555" stroke-width="1"><rect x="269.500" y="633.500" width="6" height="4.500"/><rect x="264.500" y="642" width="6" height="4"/><rect x="274" y="642" width="6" height="4"/></g><rect x="269" y="633" width="7" height="1.600" fill="#3c6fe0"/><path d="M272.500 638v2M267.500 642v-2h10v2" fill="none" stroke="#3f79bd" stroke-width="1"/>
<path d="M289 637.700h5l-2.500 3.800z" fill="#111"/>
</svg>

<div id="status"></div>
</body>
</html>
